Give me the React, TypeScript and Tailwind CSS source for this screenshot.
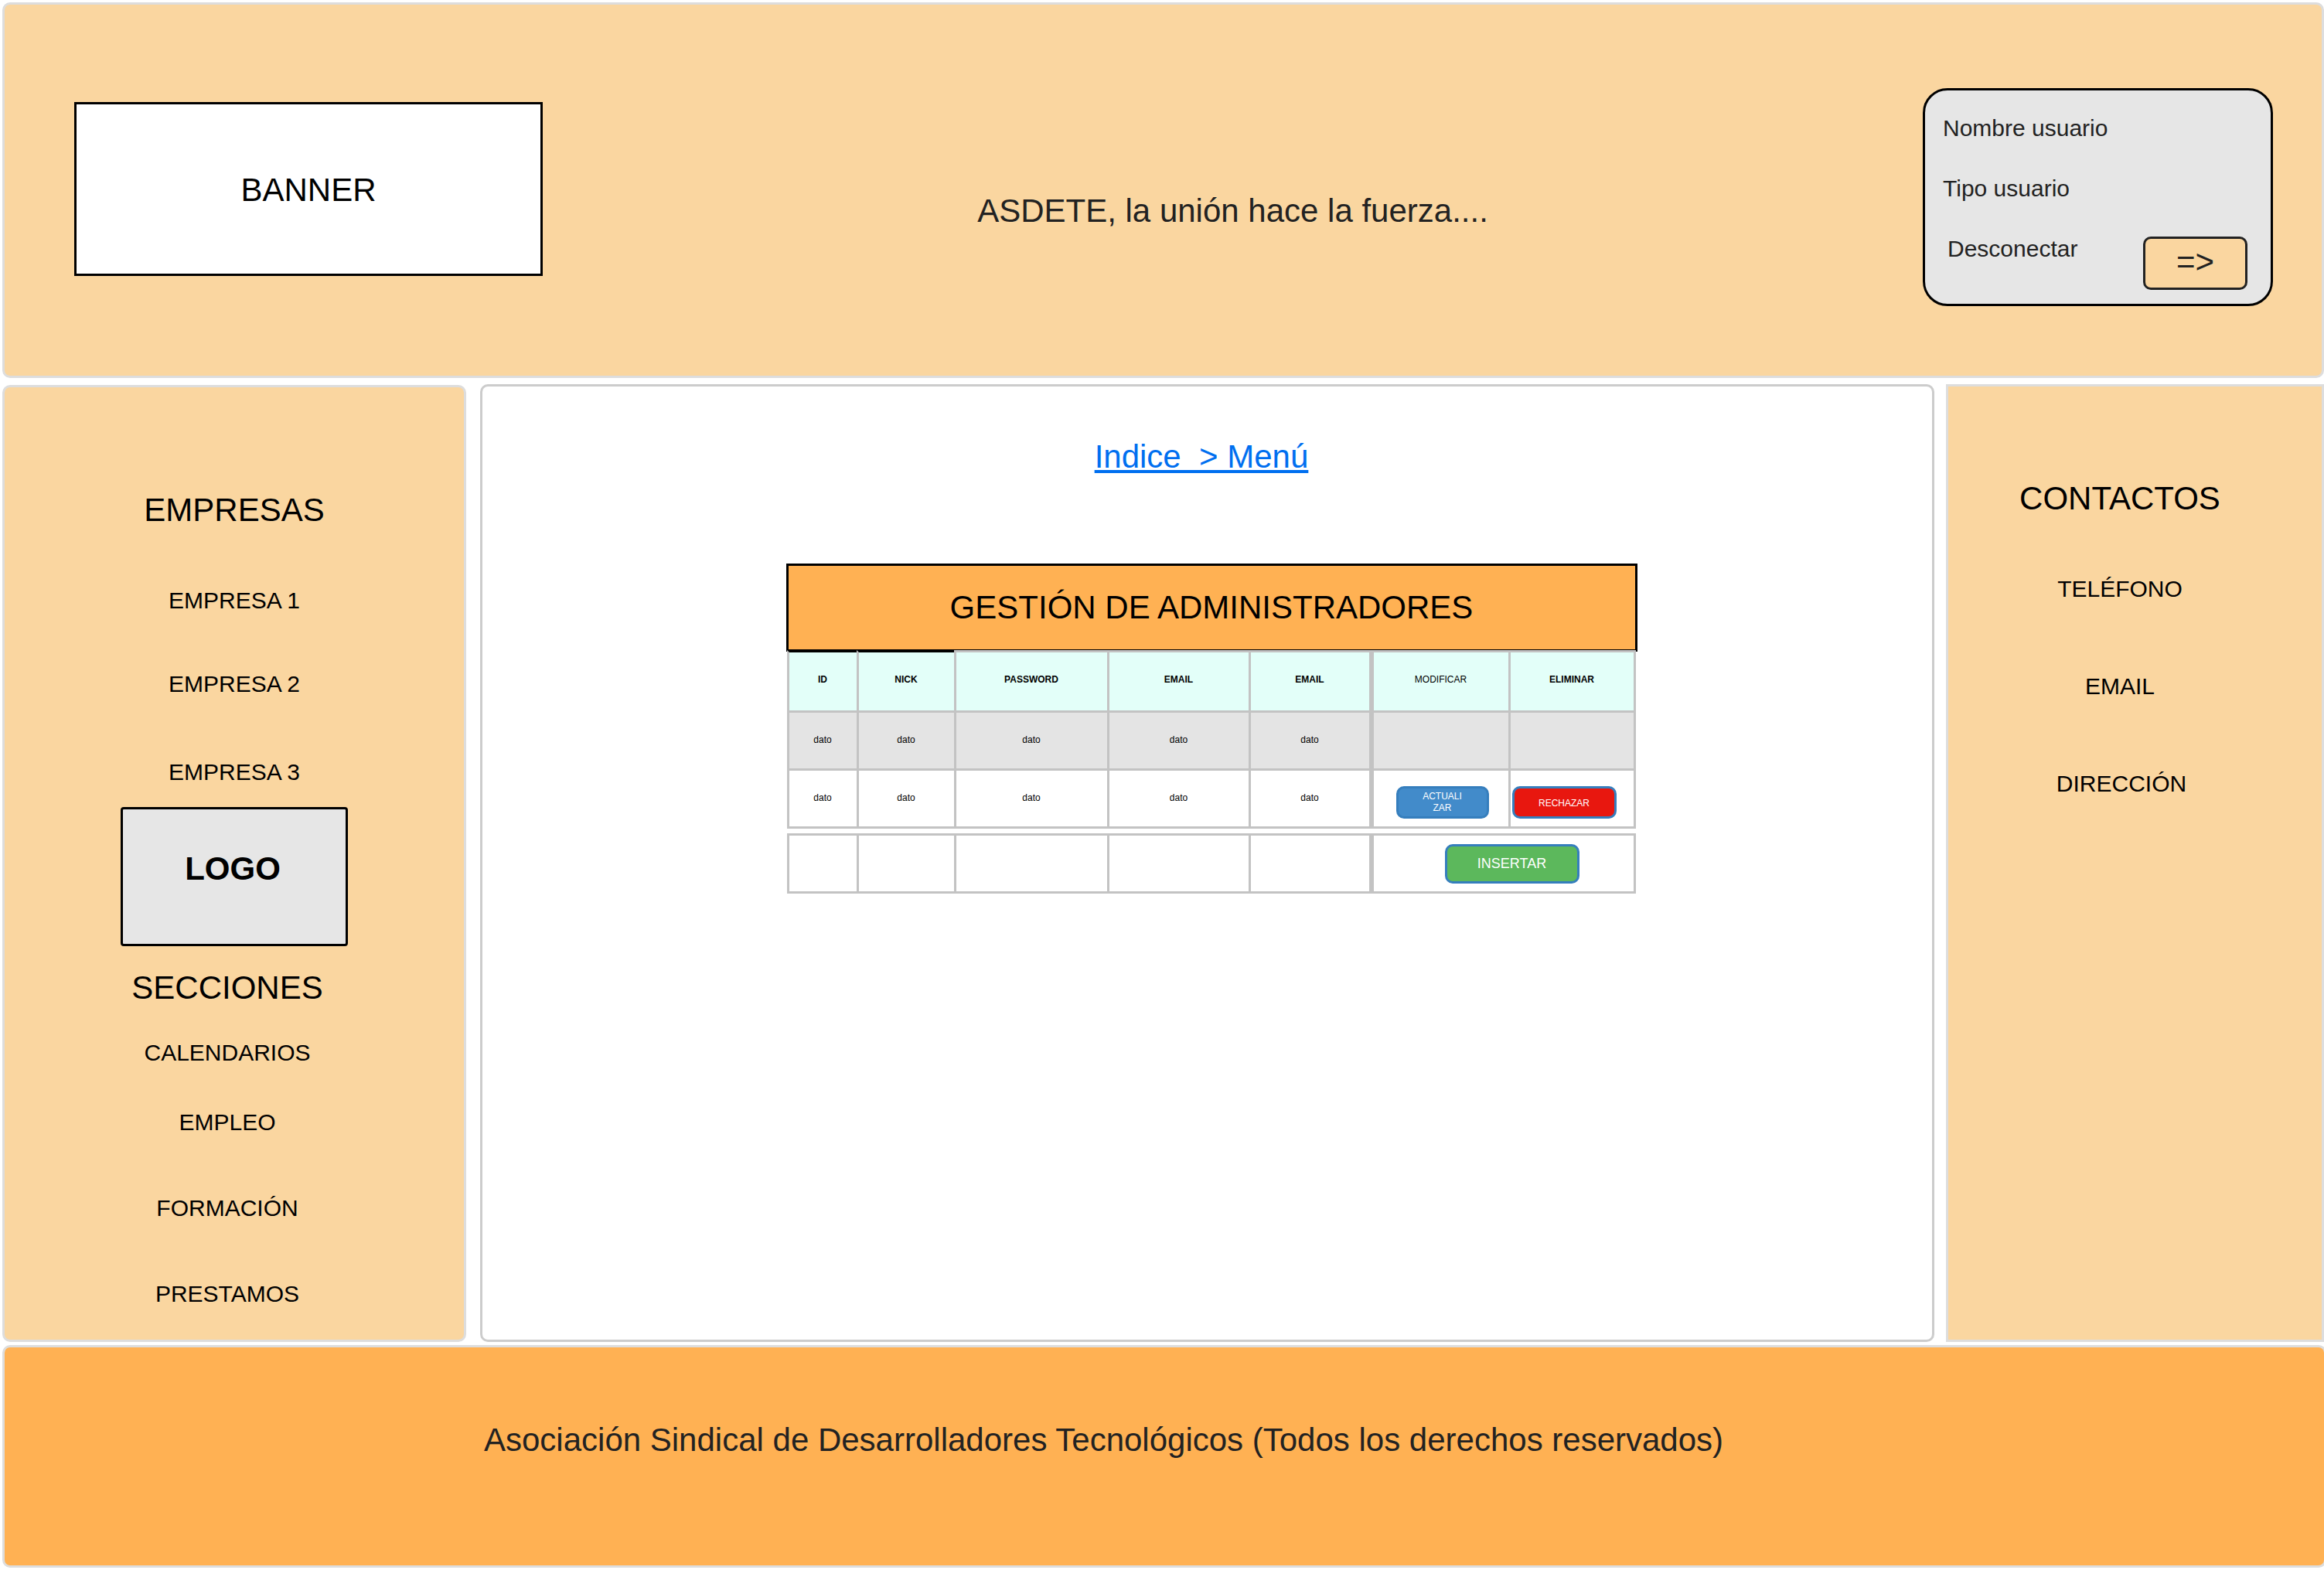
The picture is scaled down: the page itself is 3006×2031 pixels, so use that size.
const columns = ["ID", "NICK", "PASSWORD", "EMAIL", "EMAIL"];

const empresas = [
  { label: "EMPRESA 1", gap: "mt-[75px]" },
  { label: "EMPRESA 2", gap: "mt-18" },
  { label: "EMPRESA 3", gap: "mt-[78px]" },
];

const secciones = [
  { label: "CALENDARIOS", gap: "mt-[42px]" },
  { label: "EMPLEO", gap: "mt-[54px]" },
  { label: "FORMACIÓN", gap: "mt-[75px]" },
  { label: "PRESTAMOS", gap: "mt-[75px]" },
];

const contactos = [
  { label: "TELÉFONO", gap: "mt-[75px]" },
  { label: "EMAIL", gap: "mt-[90px]" },
  { label: "DIRECCIÓN", gap: "mt-[90px] pl-1" },
];

const heading = "text-[42px] leading-[48px] font-normal";
const item = "text-[30px] leading-9";
const line = "border-[#c3c3c3] border-t-3 border-l-3";
const action = "rounded-[10px] border-3 border-[#357ebd] text-white";

function MenuList({ items }: { items: { label: string; gap: string }[] }) {
  return (
    <ul className="flex flex-col items-center">
      {items.map(({ label, gap }) => (
        <li key={label} className={`${item} ${gap}`}>
          <a href="#">{label}</a>
        </li>
      ))}
    </ul>
  );
}

function Columns() {
  return (
    <colgroup>
      <col className="w-[90px]" />
      <col className="w-[126px]" />
      <col className="w-[198px]" />
      <col className="w-[183px]" />
      <col className="w-[156px]" />
      <col className="w-[180px]" />
      <col className="w-[165px]" />
    </colgroup>
  );
}

function Header() {
  return (
    <header className="flex min-h-[486px] items-start rounded-[10px] border-3 border-[#ddd] bg-[#fad6a0] pr-[63px] pl-[90px]">
      <div className={`${heading} mt-[126px] flex h-[225px] w-[606px] shrink-0 items-center justify-center border-3 border-black bg-white pt-0.5`}>
        BANNER
      </div>
      <p className={`${heading} mt-[243px] flex-1 text-center text-[#222]`}>ASDETE, la unión hace la fuerza....</p>
      <section className={`${item} mt-[108px] flex w-[453px] shrink-0 flex-col gap-[42px] rounded-[32px] border-3 border-black bg-[#e6e6e6] pt-[31px] pr-[30px] pb-[18px] pl-[23px] text-[#222]`}>
        <p>Nombre usuario</p>
        <p>Tipo usuario</p>
        <div className="flex items-start justify-between pl-1.5">
          <label htmlFor="desconectar">Desconectar</label>
          <button
            id="desconectar"
            type="button"
            className="mt-0.5 h-[69px] w-[135px] rounded-[10px] border-3 border-[#222] bg-[#fad6a0] pb-1 text-[42px] leading-[48px]"
          >
            =&gt;
          </button>
        </div>
      </section>
    </header>
  );
}

function AdminTable() {
  return (
    <section className="mt-[114px] ml-[11px] w-[1101px] text-[12px] leading-[15px]">
      <h1 className={`${heading} flex h-[114px] items-center justify-center border-3 border-black bg-[#ffb153]`}>
        GESTIÓN DE ADMINISTRADORES
      </h1>
      <table className="relative -mt-0.5 ml-px w-[1098px] table-fixed border-separate border-spacing-0 text-center">
        <Columns />
        <thead>
          <tr className="h-[78px] bg-[#e3fff9]">
            {columns.map((name, i) => (
              <th key={i} scope="col" className={`${line} pb-1 ${i < 2 ? "border-t-black" : ""}`}>
                {name}
              </th>
            ))}
            <th scope="col" className={`${line} border-l-6 pb-1 font-normal`}>MODIFICAR</th>
            <th scope="col" className={`${line} border-r-3 pb-1`}>ELIMINAR</th>
          </tr>
        </thead>
        <tbody>
          <tr className="h-[75px] bg-[#e4e4e4]">
            {columns.map((_, i) => (
              <td key={i} className={`${line} pb-0.5`}>dato</td>
            ))}
            <td className={`${line} border-l-6`} />
            <td className={`${line} border-r-3`} />
          </tr>
          <tr className="h-[78px]">
            {columns.map((_, i) => (
              <td key={i} className={`${line} border-b-3 pb-0.5`}>dato</td>
            ))}
            <td className={`${line} border-b-3 border-l-6 pt-2.5 pl-1`}>
              <button type="button" className={`${action} h-[42px] w-[120px] bg-[#428bca] align-middle`}>
                ACTUALI
                <br />
                ZAR
              </button>
            </td>
            <td className={`${line} border-r-3 border-b-3 pt-2.5 pl-0.5 text-left`}>
              <button type="button" className={`${action} h-[42px] w-[135px] bg-[#e8170f] pt-0.5 align-middle`}>
                RECHAZAR
              </button>
            </td>
          </tr>
        </tbody>
      </table>
      <table className="mt-1.5 ml-px w-[1098px] table-fixed border-separate border-spacing-0 text-center">
        <Columns />
        <tbody>
          <tr className="h-[78px]">
            {columns.map((_, i) => (
              <td key={i} className={`${line} border-b-3`} />
            ))}
            <td colSpan={2} className={`${line} border-r-3 border-b-3 border-l-6 pl-[22px]`}>
              <button type="button" className={`${action} h-[51px] w-[174px] bg-[#5cb85c] align-middle text-[18px] leading-6`}>
                INSERTAR
              </button>
            </td>
          </tr>
        </tbody>
      </table>
    </section>
  );
}

export default function App() {
  return (
    <div className="flex min-h-screen flex-col overflow-x-hidden bg-white pt-[3px] pb-[3px] pl-[3px] font-['Liberation_Sans',Arial,sans-serif] text-black">
      <Header />
      <div className="mt-2 flex flex-1 items-stretch">
        <nav className="mt-px flex w-[600px] shrink-0 flex-col rounded-[10px] border-3 border-[#ddd] bg-[#fad6a0] pt-[135px]">
          <h2 className={`${heading} text-center`}>EMPRESAS</h2>
          <MenuList items={empresas} />
          <div className="mx-auto mt-[27px] flex h-[180px] w-[294px] items-center justify-center rounded-[4px] border-3 border-black bg-[#e6e6e6] pr-1 pb-5 text-[42px] leading-[48px] font-bold">
            LOGO
          </div>
          <div className="mt-[30px] pr-[18px]">
            <h2 className={`${heading} text-center`}>SECCIONES</h2>
            <MenuList items={secciones} />
          </div>
        </nav>
        <main className="ml-[18px] flex flex-1 flex-col items-center rounded-[10px] border-3 border-[#ccc] pt-[67px]">
          <a href="#" className={`${heading} mr-[15px] whitespace-pre text-[#006ff0] underline`}>{"Indice  > Menú"}</a>
          <AdminTable />
        </main>
        <aside className="ml-[15px] w-[489px] shrink-0 border-3 border-[#ddd] bg-[#fad6a0] pt-[121px] pr-[39px]">
          <h2 className={`${heading} text-center`}>CONTACTOS</h2>
          <MenuList items={contactos} />
        </aside>
      </div>
      <footer className={`${heading} mt-1 -mr-[3px] min-h-[288px] rounded-[10px] border-3 border-[#ddd] bg-[#ffb153] pt-24 pl-[620px] text-[#222]`}>
        Asociación Sindical de Desarrolladores Tecnológicos (Todos los derechos reservados)
      </footer>
    </div>
  );
}
